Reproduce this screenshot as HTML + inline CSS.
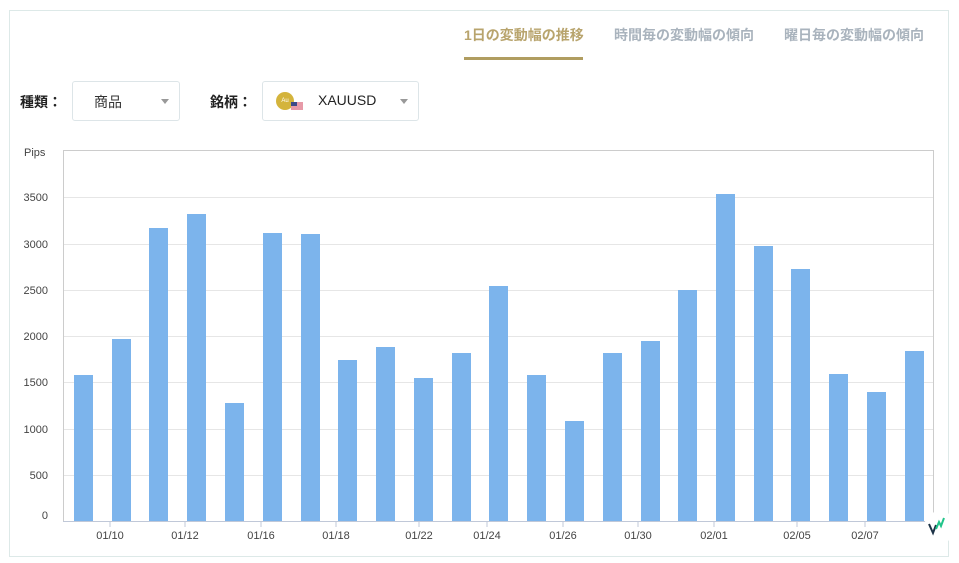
<!DOCTYPE html>
<html><head><meta charset="utf-8"><style>
body{margin:0;width:959px;height:563px;background:#fff;font-family:"Liberation Sans","Noto Sans CJK JP",sans-serif;position:relative;overflow:hidden}
.card{position:absolute;left:9px;top:10px;width:938px;height:545px;border:1px solid #dde9e8}
.tab{position:absolute;top:25px;font-size:14px;font-weight:bold;color:#a9b3bd}
.lbl{position:absolute;top:92px;font-size:14px;font-weight:bold;color:#222}
.sel{position:absolute;top:81px;height:38px;border:1px solid #dde5e8;border-radius:3px}
.arr{position:absolute;top:17px;width:0;height:0;border-left:4px solid transparent;border-right:4px solid transparent;border-top:5px solid #999}
</style></head><body>
<div class="card"></div>
<div class="tab" style="left:464px;color:#b8a46d">1日の変動幅の推移</div>
<div style="position:absolute;left:464px;top:57px;width:119px;height:3px;background:#b09d60"></div>
<div class="tab" style="left:614px">時間毎の変動幅の傾向</div>
<div class="tab" style="left:784px">曜日毎の変動幅の傾向</div>
<div class="lbl" style="left:20px">種類：</div>
<div class="sel" style="left:72px;width:106px"><span style="position:absolute;left:21px;top:10px;font-size:14px;color:#333">商品</span><div class="arr" style="left:88px"></div></div>
<div class="lbl" style="left:210px">銘柄：</div>
<div class="sel" style="left:262px;width:155px">
<div style="position:absolute;left:13px;top:10px;width:18px;height:18px;border-radius:50%;background:#d4b43c;color:#fff;font-size:6px;line-height:18px;text-align:center">Au</div>
<div style="position:absolute;left:28px;top:20px;width:12px;height:8px;background:#e79aa8"><div style="width:6px;height:4px;background:#3c4a88"></div></div>
<span style="position:absolute;left:55px;top:10px;font-size:14px;color:#222">XAUUSD</span><div class="arr" style="left:137px"></div></div>
<svg width="959" height="563" style="position:absolute;left:0;top:0" font-family="Liberation Sans, sans-serif" font-size="11" fill="#444">
<text x="24" y="156">Pips</text>
<rect x="63.5" y="150.5" width="870" height="371" fill="none" stroke="#ccc"/>
<g stroke="#e6e6e6">
<line x1="64" x2="933" y1="197.5" y2="197.5"/><line x1="64" x2="933" y1="244.5" y2="244.5"/><line x1="64" x2="933" y1="290.5" y2="290.5"/><line x1="64" x2="933" y1="336.5" y2="336.5"/><line x1="64" x2="933" y1="382.5" y2="382.5"/><line x1="64" x2="933" y1="429.5" y2="429.5"/><line x1="64" x2="933" y1="475.5" y2="475.5"/></g>
<g text-anchor="end">
<text x="48" y="201">3500</text><text x="48" y="248">3000</text><text x="48" y="294">2500</text><text x="48" y="340">2000</text><text x="48" y="386">1500</text><text x="48" y="433">1000</text><text x="48" y="479">500</text><text x="48" y="519">0</text></g>
<g fill="#7cb4ec">
<rect x="74" y="375" width="19" height="146"/><rect x="112" y="339" width="19" height="182"/><rect x="149" y="228" width="19" height="293"/><rect x="187" y="214" width="19" height="307"/><rect x="225" y="403" width="19" height="118"/><rect x="263" y="233" width="19" height="288"/><rect x="301" y="234" width="19" height="287"/><rect x="338" y="360" width="19" height="161"/><rect x="376" y="347" width="19" height="174"/><rect x="414" y="378" width="19" height="143"/><rect x="452" y="353" width="19" height="168"/><rect x="489" y="286" width="19" height="235"/><rect x="527" y="375" width="19" height="146"/><rect x="565" y="421" width="19" height="100"/><rect x="603" y="353" width="19" height="168"/><rect x="641" y="341" width="19" height="180"/><rect x="678" y="290" width="19" height="231"/><rect x="716" y="194" width="19" height="327"/><rect x="754" y="246" width="19" height="275"/><rect x="791" y="269" width="19" height="252"/><rect x="829" y="374" width="19" height="147"/><rect x="867" y="392" width="19" height="129"/><rect x="905" y="351" width="19" height="170"/></g>
<line x1="63" x2="933" y1="521.5" y2="521.5" stroke="#c0c8d8"/>
<g stroke="#c0c8d8"><line x1="110" x2="110" y1="522" y2="527"/><line x1="185" x2="185" y1="522" y2="527"/><line x1="261" x2="261" y1="522" y2="527"/><line x1="336" x2="336" y1="522" y2="527"/><line x1="419" x2="419" y1="522" y2="527"/><line x1="487" x2="487" y1="522" y2="527"/><line x1="563" x2="563" y1="522" y2="527"/><line x1="638" x2="638" y1="522" y2="527"/><line x1="714" x2="714" y1="522" y2="527"/><line x1="797" x2="797" y1="522" y2="527"/><line x1="865" x2="865" y1="522" y2="527"/></g>
<g text-anchor="middle"><text x="110" y="539">01/10</text><text x="185" y="539">01/12</text><text x="261" y="539">01/16</text><text x="336" y="539">01/18</text><text x="419" y="539">01/22</text><text x="487" y="539">01/24</text><text x="563" y="539">01/26</text><text x="638" y="539">01/30</text><text x="714" y="539">02/01</text><text x="797" y="539">02/05</text><text x="865" y="539">02/07</text></g>
<circle cx="940" cy="527" r="16" fill="#fff"/>
<path d="M929 524 L933 533 L936 525" stroke="#1d3347" stroke-width="2" fill="none"/>
<path d="M936 529 L939 522 L941 526 L944 518" stroke="#22c48a" stroke-width="2" fill="none"/>
</svg>
</body></html>
